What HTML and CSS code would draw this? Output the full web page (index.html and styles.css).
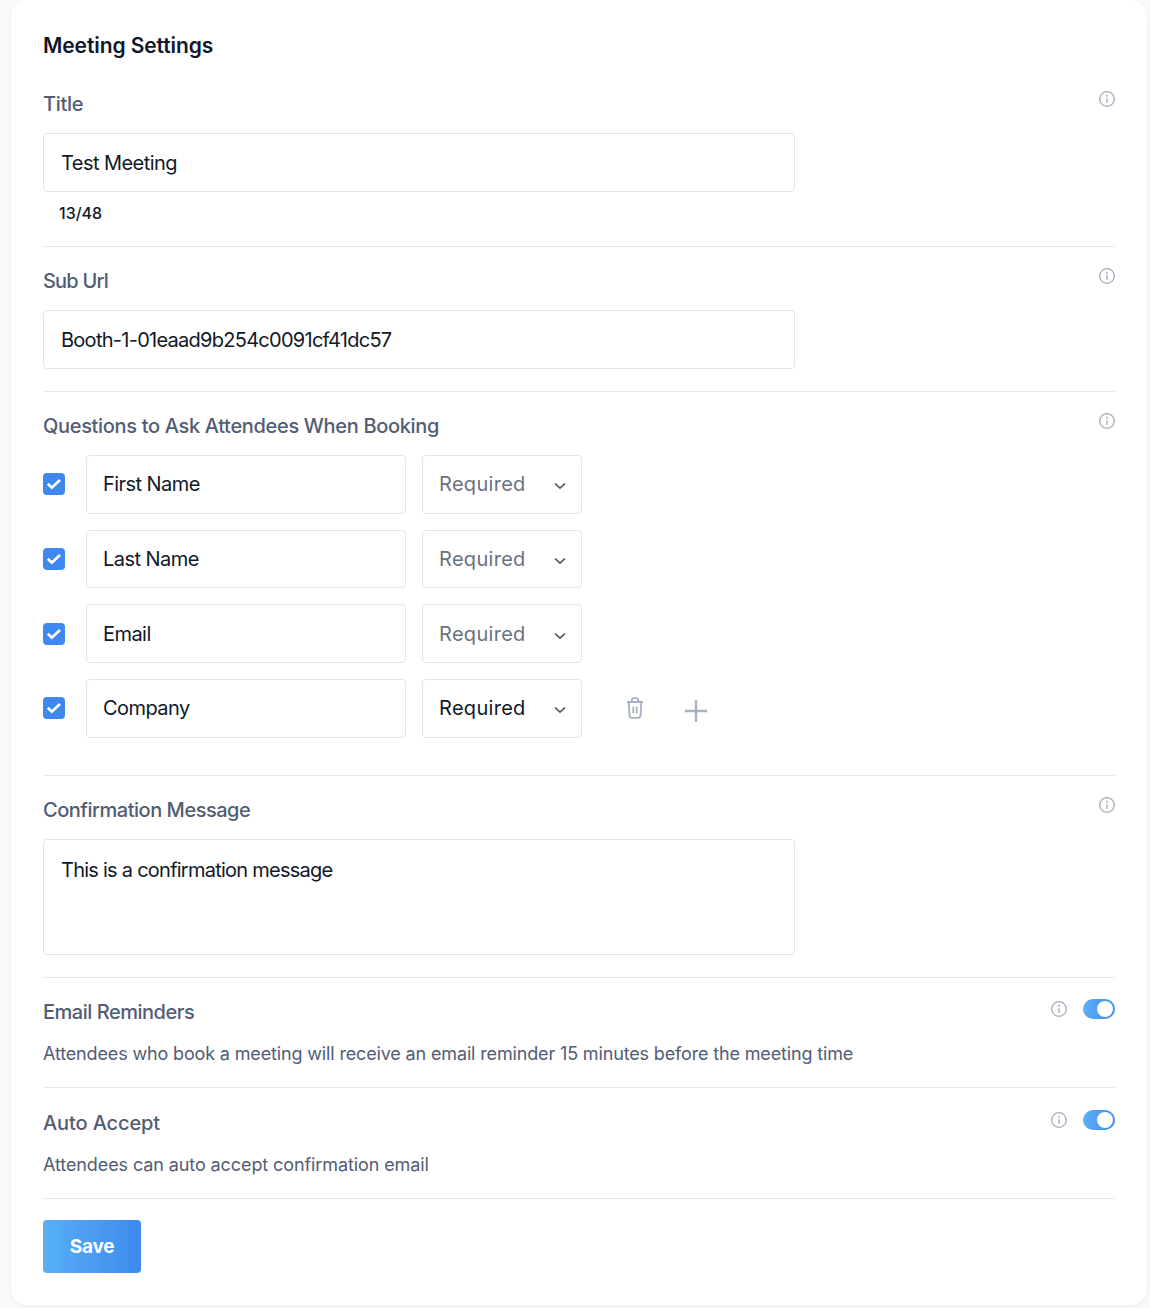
FILE: index.html
```html
<!DOCTYPE html>
<html lang="en">
<head>
<meta charset="utf-8">
<title>Meeting Settings</title>
<link rel="stylesheet" href="styles.css">
</head>
<body>
<svg width="0" height="0" class="defs" aria-hidden="true">
  <symbol id="info" viewBox="0 0 16 16"><circle cx="8" cy="8" r="7.300" fill="none" stroke="currentColor" stroke-width="1.300"/><path d="M8 7.200v4.600" fill="none" stroke="currentColor" stroke-width="1.400"/><circle cx="8" cy="4.800" r=".95" fill="currentColor"/></symbol>
  <symbol id="chev" viewBox="0 0 12 12"><path d="M1 3.500 6 8.200l5-4.700" fill="none" stroke="currentColor" stroke-width="1.700"/></symbol>
  <symbol id="check" viewBox="0 0 22 22"><path d="M4.800 10.800l4 3.900L17 6.900" fill="none" stroke="#fff" stroke-width="2.700"/></symbol>
</svg>
<main class="card">
  <h1 class="heading">Meeting Settings</h1>
  <section class="sec sec-first">
    <div class="label-row"><span class="label">Title</span><svg class="info"><use href="#info"/></svg></div>
    <div class="field wide">Test Meeting</div>
    <div class="counter">13/48</div>
  </section>
  <section class="sec">
    <div class="label-row"><span class="label label-tight">Sub Url</span><svg class="info"><use href="#info"/></svg></div>
    <div class="field wide field-tight">Booth-1-01eaad9b254c0091cf41dc57</div>
  </section>
  <section class="sec sec-questions">
    <div class="label-row"><span class="label">Questions to Ask Attendees When Booking</span><svg class="info"><use href="#info"/></svg></div>
    <div class="rows">
      <div class="q-row">
        <span class="checkbox"><svg class="check"><use href="#check"/></svg></span>
        <div class="field name">First Name</div>
        <div class="field select muted">Required<svg class="chev"><use href="#chev"/></svg></div>
      </div>
      <div class="q-row">
        <span class="checkbox"><svg class="check"><use href="#check"/></svg></span>
        <div class="field name">Last Name</div>
        <div class="field select muted">Required<svg class="chev"><use href="#chev"/></svg></div>
      </div>
      <div class="q-row">
        <span class="checkbox"><svg class="check"><use href="#check"/></svg></span>
        <div class="field name">Email</div>
        <div class="field select muted">Required<svg class="chev"><use href="#chev"/></svg></div>
      </div>
      <div class="q-row">
        <span class="checkbox"><svg class="check"><use href="#check"/></svg></span>
        <div class="field name">Company</div>
        <div class="field select">Required<svg class="chev"><use href="#chev"/></svg></div>
        <svg class="trash" viewBox="0 0 18 22"><path d="M1 5h16M5.800 5V3.400C5.800 2 6.800 1.200 8 1.200h2c1.200 0 2.200.8 2.200 2.200V5M2.800 5l.6 13c.1 1.700 1.100 2.800 2.600 2.800h6c1.500 0 2.500-1.100 2.600-2.800L15.200 5M7.300 9.800v6.400M10.700 9.800v6.400" fill="none" stroke="currentColor" stroke-width="1.800"/></svg>
        <svg class="plus" viewBox="0 0 22 22"><path d="M11 0v22M0 11h22" fill="none" stroke="currentColor" stroke-width="2.400"/></svg>
      </div>
    </div>
  </section>
  <section class="sec">
    <div class="label-row"><span class="label label-mid">Confirmation Message</span><svg class="info"><use href="#info"/></svg></div>
    <div class="field wide area">This is a confirmation message</div>
  </section>
  <section class="sec sec-toggle">
    <div class="label-row"><span class="label label-mid">Email Reminders</span><span class="controls"><svg class="info"><use href="#info"/></svg><span class="toggle"></span></span></div>
    <p class="desc">Attendees who book a meeting will receive an email reminder 15 minutes before the meeting time</p>
  </section>
  <section class="sec sec-toggle">
    <div class="label-row"><span class="label label-wide">Auto Accept</span><span class="controls"><svg class="info"><use href="#info"/></svg><span class="toggle"></span></span></div>
    <p class="desc desc-wide">Attendees can auto accept confirmation email</p>
  </section>
  <button class="save" type="button">Save</button>
</main>
</body>
</html>
```
FILE: styles.css
```css
* { box-sizing: border-box; }
html, body { margin: 0; padding: 0; }
body {
  background: #fafafa;
  font-family: "Inter", "Liberation Sans", sans-serif;
  color: #111827;
  height: 1308px;
  overflow: hidden;
  padding: 0 3px 0 11px;
}
.defs { position: absolute; }
.card {
  background: #fff;
  height: 1305px;
  border-radius: 16px;
  padding: 33px 32px 32px;
  box-shadow: 0 1px 4px rgba(0, 0, 0, .06);
}
.heading {
  margin: 0;
  font-size: 21px;
  line-height: 26px;
  font-weight: 600;
  letter-spacing: -.09px;
  color: #0f172a;
}
.sec {
  padding: 20px 0 22px;
  border-bottom: 1px solid #e5e7eb;
}
.sec-first { padding: 31px 0 22px; }
.sec-questions { padding-bottom: 37px; }
.sec-toggle { padding-bottom: 19px; }
.sec-toggle + .sec-toggle { padding-top: 21px; }
.sec-toggle .label-row { margin-bottom: 14px; }
.label-row {
  display: flex;
  justify-content: space-between;
  align-items: flex-start;
  height: 28px;
  margin-bottom: 15px;
}
.label {
  font-size: 20px;
  line-height: 28px;
  font-weight: 500;
  letter-spacing: -.33px;
  color: #535c75;
}
.label-tight { letter-spacing: -.8px; }
.label-mid { letter-spacing: -.48px; }
.label-wide { letter-spacing: -.12px; }
.info {
  width: 16px;
  height: 16px;
  margin-top: 1px;
  color: #a3a9b8;
}
.field {
  display: flex;
  align-items: center;
  height: 59px;
  padding: 0 16px 0 17px;
  background: #fff;
  border: 1px solid #e2e4e9;
  border-radius: 4px;
  font-size: 20px;
  letter-spacing: -.55px;
  color: #111827;
}
.field-tight { letter-spacing: -.73px; }
.wide { width: 752px; }
.area {
  height: 116px;
  align-items: flex-start;
  padding-top: 16px;
  line-height: 28px;
  letter-spacing: -.75px;
}
.counter {
  padding: 10px 0 0 16px;
  font-size: 16px;
  line-height: 22px;
  font-weight: 500;
  color: #111827;
}
.rows {
  display: flex;
  flex-direction: column;
  gap: 16px;
}
.q-row {
  display: flex;
  align-items: center;
  height: 58.670px;
}
.checkbox {
  width: 22px;
  height: 22px;
  border-radius: 4px;
  background: #3f88f0;
  margin-right: 21px;
}
.check { display: block; width: 22px; height: 22px; }
.name { width: 320px; height: 100%; margin-right: 16px; padding-left: 16px; letter-spacing: -.55px; }
.select {
  width: 160px;
  height: 100%;
  justify-content: space-between;
  padding: 0 15px 0 16px;
  letter-spacing: .3px;
}
.muted { color: #6b7280; }
.chev { width: 12px; height: 12px; margin-top: 4px; color: #4b5563; }
.trash { width: 18px; height: 22px; margin-left: 44px; color: #a7afc3; }
.plus { width: 22px; height: 22px; margin: 5px 0 0 41px; color: #a7afc3; }
.controls {
  display: flex;
  align-items: center;
  gap: 16px;
}
.toggle {
  position: relative;
  width: 32px;
  height: 20px;
  margin-top: 1px;
  border-radius: 10px;
  background: linear-gradient(90deg, #5cb0f5, #3f8cee);
}
.toggle::after {
  content: "";
  position: absolute;
  top: 2px;
  right: 2px;
  width: 16px;
  height: 16px;
  border-radius: 50%;
  background: #fff;
}
.desc {
  margin: 0;
  font-size: 18px;
  line-height: 28px;
  letter-spacing: -.15px;
  color: #535c75;
}
.desc-wide { letter-spacing: -.1px; }
.save {
  display: block;
  width: 98px;
  height: 53px;
  margin-top: 21px;
  border: 0;
  border-radius: 4px;
  background: linear-gradient(90deg, #58b0f5, #3e89ee);
  color: #fff;
  font-family: inherit;
  font-size: 19px;
  font-weight: 700;
  letter-spacing: -.2px;
}
```
